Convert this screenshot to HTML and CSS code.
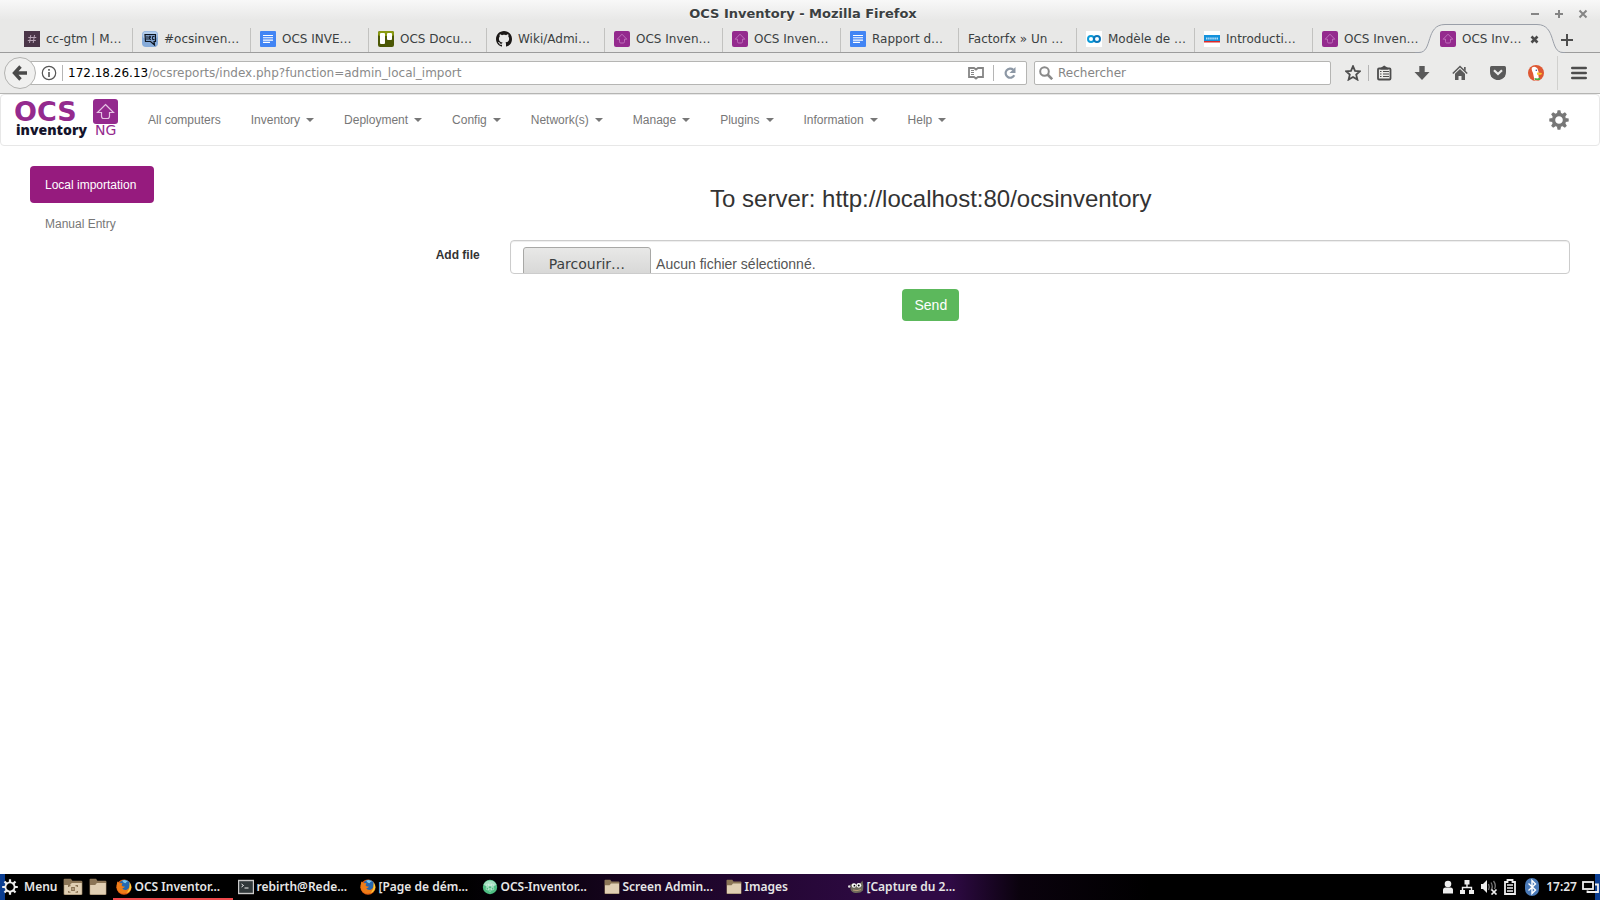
FILE: index.html
```html
<!DOCTYPE html>
<html lang="fr">
<head>
<meta charset="utf-8">
<title>OCS Inventory</title>
<meta name="viewport" content="width=device-width, initial-scale=1">
<link rel="stylesheet" href="styles.css">
</head>
<body>
<svg class="defs" aria-hidden="true">
  <symbol id="ocs" viewBox="0 0 16 16"><rect width="16" height="16" rx="2" fill="#942a8e"/><path d="M8 3.200 12.800 8.200h-2.300v2.300q0 1.500-1.200 1.500H6.700q-1.200 0-1.200-1.500V8.200H3.200z" fill="none" stroke="#c77fc4" stroke-width=".8"/></symbol>
  <symbol id="doc" viewBox="0 0 16 16"><rect width="16" height="16" rx="1" fill="#4285f4"/><path d="M3 4.500h10M3 6.800h10M3 9.100h10M3 11.400h7" stroke="#fff" stroke-width="1.100"/></symbol>
  <symbol id="folder" viewBox="0 0 16 16"><path d="M.5 1.500q0-.8.800-.8h5l1.200 1.800h7q1 0 1 1v10.700q0 .8-.8.800H1.300q-.8 0-.8-.8z" fill="#8b7556"/><path d="M1 6.200h4.500L7 4.500h8v9.500q0 .6-.6.600H1.600q-.6 0-.6-.6z" fill="#e0cfb3"/></symbol>
  <symbol id="firefox" viewBox="0 0 16 16"><circle cx="8" cy="8.200" r="7.600" fill="#e05a10"/><circle cx="8.800" cy="6.300" r="5.600" fill="#2568b0"/><path d="M6 1.500q3.500-1.500 6 1.200-2 0-2.200 1.300-1.800.8-3.800-2.500" fill="#7cc7ec"/><path d="M1.300 2.500 3.800 4.200q1.800-.6 2.700.3L5.500 6.300l1.400 1.200 2 .1q-.6 1.700-2.700 1.600 1.500 2.500 4.500 1.500 3.300-1.300 2.800-5.400 2 4-.7 6.900-3.500 3.400-8 1.800Q.3 12 .6 6.500z" fill="#ee7d18"/><path d="M13.200 3.300q3.200 3.700 1.300 7.700-1.500 2.700-4.500 3.500 4.700-4 3.200-11.200" fill="#ffcf36"/></symbol>
</svg>

<header class="browser">
  <div class="titlebar">
    <span class="window-title">OCS Inventory - Mozilla Firefox</span>
    <div class="window-controls">
      <button aria-label="Réduire"><svg width="10" height="10"><path d="M1 5h8" stroke="#858585" stroke-width="2"/></svg></button>
      <button aria-label="Agrandir"><svg width="10" height="10"><path d="M1 5h8M5 1v8" stroke="#858585" stroke-width="2"/></svg></button>
      <button aria-label="Fermer"><svg width="10" height="10"><path d="M1.500 1.500l7 7M8.500 1.500l-7 7" stroke="#858585" stroke-width="2"/></svg></button>
    </div>
  </div>

  <nav class="tabs" aria-label="Onglets">
    <a class="tab" href="#"><svg class="fav" viewBox="0 0 16 16"><rect width="16" height="16" fill="#4a3548"/><path d="M6.800 4 5.500 12M10.500 4 9.200 12M4.300 6.500h8M3.800 9.500h8" stroke="#b7a3b5" stroke-width="1"/></svg>cc-gtm | M…</a>
    <a class="tab" href="#"><svg class="fav" viewBox="0 0 16 16"><rect width="16" height="16" rx="4" fill="#86abd9"/><rect x=".5" y=".5" width="15" height="7" rx="3.500" fill="#b3cdec"/><path d="M3 3.500h10.500v7H12l.5 3.500-4-3.500h-5z" fill="#7f9fc9" stroke="#0d1520" stroke-width="1.200"/><path d="M5 5v4M7 9V5.300h1.500v1.500H7l1.800 2.200M12.500 5.500h-2v3h2" fill="none" stroke="#0d1520" stroke-width=".9"/></svg>#ocsinven…</a>
    <a class="tab" href="#"><svg class="fav"><use href="#doc"/></svg>OCS INVE…</a>
    <a class="tab" href="#"><svg class="fav" viewBox="0 0 16 16"><rect width="16" height="16" rx="2" fill="#4c5806"/><rect width="16" height="5" rx="2" fill="#8a9a12"/><rect x="2" y="2" width="5" height="11" rx="1" fill="#fff"/><rect x="9" y="2" width="5" height="7" rx="1" fill="#fff"/></svg>OCS Docu…</a>
    <a class="tab" href="#"><svg class="fav" viewBox="0 0 16 16"><path fill="#1b1817" d="M8 0C3.580 0 0 3.580 0 8c0 3.540 2.290 6.530 5.470 7.590.4.070.550-.17.550-.38 0-.19-.01-.82-.01-1.490-2.010.37-2.530-.49-2.690-.94-.09-.23-.48-.94-.82-1.130-.28-.15-.68-.52-.01-.53.630-.01 1.080.580 1.230.820.720 1.210 1.870.870 2.330.660.070-.52.280-.87.510-1.070-1.780-.2-3.640-.89-3.640-3.950 0-.87.310-1.590.820-2.150-.08-.2-.36-1.020.080-2.120 0 0 .670-.21 2.200.820.640-.18 1.320-.27 2-.27s1.360.09 2 .27c1.530-1.040 2.200-.82 2.200-.82.440 1.100.160 1.920.080 2.120.510.560.820 1.270.820 2.150 0 3.070-1.870 3.750-3.650 3.950.290.250.540.730.540 1.480 0 1.070-.01 1.930-.01 2.200 0 .210.150.460.550.380A8.010 8.010 0 0 0 16 8c0-4.420-3.580-8-8-8"/></svg>Wiki/Admi…</a>
    <a class="tab" href="#"><svg class="fav"><use href="#ocs"/></svg>OCS Inven…</a>
    <a class="tab" href="#"><svg class="fav"><use href="#ocs"/></svg>OCS Inven…</a>
    <a class="tab" href="#"><svg class="fav"><use href="#doc"/></svg>Rapport d…</a>
    <a class="tab" href="#">Factorfx » Un …</a>
    <a class="tab" href="#"><svg class="fav" viewBox="0 0 16 16"><rect width="16" height="16" fill="#fff"/><circle cx="5" cy="8" r="3" fill="none" stroke="#0a9ad8" stroke-width="2"/><circle cx="11" cy="8" r="3" fill="none" stroke="#0a78bc" stroke-width="2"/></svg>Modèle de …</a>
    <a class="tab" href="#"><svg class="fav" viewBox="0 0 16 16"><rect width="16" height="16" fill="#fff"/><rect y="4" width="16" height="6" fill="#1592dc"/><path d="M2 7.500h12" stroke="#b8def5" stroke-width="2" stroke-dasharray="1.500 .6"/><rect y="10" width="16" height="1.500" fill="#dc2a2a"/></svg>Introducti…</a>
    <a class="tab last" href="#"><svg class="fav"><use href="#ocs"/></svg>OCS Inven…</a>
    <a class="tab active" href="#" aria-current="page">
      <svg class="tab-shape" width="150" height="30" viewBox="0 0 150 30"><path d="M0 28.500h4C18 28.500 10 .5 30 .5h92c20 0 12 28 26 28h2V30H0z" fill="#ebebea"/><path d="M0 28.500h4C18 28.500 10 .5 30 .5h92c20 0 12 28 26 28h2" fill="none" stroke="#9a9fa8"/></svg>
      <svg class="fav"><use href="#ocs"/></svg><span>OCS Inv…</span>
      <svg class="close" width="9" height="9"><path d="M1.500 1.500l6 6M7.500 1.500l-6 6" stroke="#4a4a4a" stroke-width="2.600"/></svg>
    </a>
    <button class="new-tab" aria-label="Nouvel onglet"><svg width="12" height="12"><path d="M0 6h12M6 0v12" stroke="#4d4d4d" stroke-width="2"/></svg></button>
  </nav>

  <div class="toolbar">
    <button class="back" aria-label="Retour"><svg width="16" height="16"><path d="M8.500 1.500 2.500 8l6 6.500M3 8h12" fill="none" stroke="#4a4a4a" stroke-width="3.400"/></svg></button>
    <div class="urlbar">
      <svg width="16" height="16"><circle cx="8" cy="8" r="6.700" fill="none" stroke="#555" stroke-width="1.200"/><path d="M8 7v5M8 4v1.800" stroke="#555" stroke-width="1.600"/></svg>
      <i class="rule"></i>
      <a class="url" href="#"><b>172.18.26.13</b>/ocsreports/index.php?function=admin_local_import</a>
      <svg width="16" height="14"><path d="M1 2h5l2 1.500L10 2h5v9h-5l-2 1.500L6 11H1z" fill="#fff" stroke="#858585" stroke-width="1.800"/><path d="M3 4.500h3M3 6.500h3M3 8.500h3" stroke="#858585"/></svg>
      <i class="rule"></i>
      <svg width="14" height="14"><path d="M11.300 9.300a4.600 4.600 0 1 1-1-5.600" fill="none" stroke="#8d98a5" stroke-width="2.200"/><path d="M12.500 1v6h-6z" fill="#8d98a5"/></svg>
    </div>
    <div class="search">
      <svg width="14" height="14"><circle cx="5.500" cy="5.500" r="4.300" fill="none" stroke="#8a8a8a" stroke-width="2"/><path d="M8.500 8.500l4.700 4.700" stroke="#8a8a8a" stroke-width="2.600"/></svg>
      <input type="text" placeholder="Rechercher" aria-label="Rechercher">
    </div>
    <div class="tools">
      <button class="star" aria-label="Marque-page"><svg width="16" height="16"><path d="M8 1.200l2 4.700 5 .4-3.800 3.300 1.200 5L8 12l-4.400 2.600 1.200-5L1 6.300l5-.4z" fill="none" stroke="#4d4d4d" stroke-width="1.800"/></svg></button>
      <i class="rule"></i>
      <button class="list" aria-label="Liste"><svg width="16" height="16"><rect x="2" y="3.500" width="12.500" height="11" rx="1" fill="none" stroke="#4d4d4d" stroke-width="1.800"/><path d="M4.500 4.500V3L8.200.5 12 3v1.500z" fill="#4d4d4d"/><path d="M4 6.500h1.500M7 6.500h6M4 9h1.500M7 9h6M4 11.500h1.500M7 11.500h6" stroke="#4d4d4d" stroke-width="1.200"/></svg></button>
      <button aria-label="Téléchargements"><svg width="16" height="16"><path d="M5.300 1h5.400v6H15.500L8 15 .5 7h4.800z" fill="#5a5a5a"/></svg></button>
      <button aria-label="Accueil"><svg width="16" height="16"><path d="M.8 8.500 8 1.500l7.200 7" fill="none" stroke="#5a5a5a" stroke-width="1.600"/><path d="M3 8.700 8 4l5 4.700V15H9.500v-4h-3v4H3zM12 2h1.700v4L12 4.500z" fill="#5a5a5a"/></svg></button>
      <button aria-label="Pocket"><svg width="16" height="16"><path d="M0 2.500q0-1.500 1.500-1.500h13Q16 1 16 2.500V7q0 5-4 7l-2.500.9h-3L4 14Q0 12 0 7z" fill="#5a5a5a"/><path d="M4 5.200 8 9l4-3.800" fill="none" stroke="#ebebea" stroke-width="2.200"/></svg></button>
      <button aria-label="DuckDuckGo"><svg width="16" height="16"><circle cx="8" cy="8" r="8" fill="#de5833"/><path d="M4 2.500Q7 .8 9.500 3.500q1.500 3 .8 6L11 14.500q-2.300 1.300-4.500.8L5 8Q3 4 4 2.500" fill="#fff"/><path d="M9 7.500l5 .5-.8 1.700H9z" fill="#fdc62e"/><path d="M6.500 13l3 .5 2.500-1v2.500H7z" fill="#4cae42"/><circle cx="8.300" cy="5.300" r=".8" fill="#2d4f8e"/></svg></button>
      <i class="rule tall"></i>
      <button class="menu" aria-label="Menu"><svg width="16" height="14"><path d="M1.300 2h13.400M1.300 7h13.400M1.300 12h13.400" stroke="#4d4d4d" stroke-width="2.600" stroke-linecap="round"/></svg></button>
    </div>
  </div>
</header>

<nav class="navbar">
  <a class="brand" href="#" aria-label="OCS Inventory NG">
    <svg width="104" height="42" viewBox="0 0 104 42">
      <text class="logo-ocs" x="-1" y="23">OCS</text>
      <text class="logo-inv" x="1" y="37">inventory</text>
      <text class="logo-ng" x="80" y="37">NG</text>
      <rect x="78" y="1" width="25" height="25" rx="3" fill="#942a8e"/>
      <path d="M90.500 6.500 98.500 14.500H94.500V18q0 2.500-2 2.500H88.500q-2 0-2-2.500V14.500H82.500z" fill="none" stroke="#e5c3e3" stroke-width="1.200"/>
    </svg>
  </a>
  <ul class="nav-links">
    <li><a href="#">All computers</a></li>
    <li><a href="#">Inventory <i class="caret"></i></a></li>
    <li><a href="#">Deployment <i class="caret"></i></a></li>
    <li><a href="#">Config <i class="caret"></i></a></li>
    <li><a href="#">Network(s) <i class="caret"></i></a></li>
    <li><a href="#">Manage <i class="caret"></i></a></li>
    <li><a href="#">Plugins <i class="caret"></i></a></li>
    <li><a href="#">Information <i class="caret"></i></a></li>
    <li><a href="#">Help <i class="caret"></i></a></li>
  </ul>
  <button class="settings" aria-label="Settings"><svg width="20" height="20" viewBox="-10 -10 20 20"><circle r="5.500" fill="none" stroke="#777" stroke-width="3.400"/><g fill="#777"><path id="tooth" d="M-2.100-6.500-1.400-9.700H1.400L2.100-6.500z"/><use href="#tooth" transform="rotate(45)"/><use href="#tooth" transform="rotate(90)"/><use href="#tooth" transform="rotate(135)"/><use href="#tooth" transform="rotate(180)"/><use href="#tooth" transform="rotate(225)"/><use href="#tooth" transform="rotate(270)"/><use href="#tooth" transform="rotate(315)"/></g></svg></button>
</nav>

<main class="page">
  <nav class="side">
    <a class="pill current" href="#">Local importation</a>
    <a class="pill" href="#">Manual Entry</a>
  </nav>
  <form class="import">
    <h3>To server: http://localhost:80/ocsinventory</h3>
    <div class="field">
      <label for="file">Add file</label>
      <div class="file-control">
        <button type="button" class="browse" tabindex="-1">Parcourir…</button>
        <span>Aucun fichier sélectionné.</span>
        <input type="file" id="file">
      </div>
    </div>
    <button type="button" class="send">Send</button>
  </form>
</main>

<footer class="taskbar">
  <button class="start"><svg width="16" height="16" viewBox="-8 -8 16 16"><circle r="4.600" fill="none" stroke="#eee" stroke-width="1.800"/><path d="M0-5v-2.800M0 5v2.800M-5 0h-2.800M5 0h2.800M3.500 3.500l2 2M-3.500-3.500l-2-2M3.500-3.500l2-2M-3.500 3.500l-2 2" stroke="#eee" stroke-width="2.200"/></svg>Menu</button>
  <button class="launch" aria-label="Dossier personnel"><svg width="20" height="18" viewBox="0 0 16 16" preserveAspectRatio="none"><use href="#folder" width="16" height="16"/><path d="M4.500 8V6.800h1.500M10 6.800h1.500V8M11.500 11.500v1.200H10M6 12.700H4.500v-1.200M7 8.500h2v2.500H7z" fill="none" stroke="#8b7556"/></svg></button>
  <button class="launch" aria-label="Fichiers"><svg width="18" height="18"><use href="#folder"/></svg></button>
  <div class="tasks">
    <button class="task on"><svg class="ti"><use href="#firefox"/></svg>OCS Inventor...</button>
    <button class="task"><svg class="ti" viewBox="0 0 16 16"><rect x=".5" y="1.500" width="15" height="13" fill="#30383a" stroke="#c9c9c9" stroke-width="1.400"/><path d="M3.500 5l2 1.500-2 1.500M6.500 9h4" fill="none" stroke="#eee"/></svg>rebirth@Rede...</button>
    <button class="task"><svg class="ti"><use href="#firefox"/></svg>[Page de dém...</button>
    <button class="task"><svg class="ti" viewBox="0 0 16 16"><circle cx="8" cy="8" r="7.200" fill="#4fbf83"/><path d="M1.500 6A7 7 0 0 1 14.500 6Q8 9 1.500 6" fill="#a3e0c0"/><g fill="none" stroke="#d9f5e6" stroke-width=".5"><ellipse cx="8" cy="8" rx="4.500" ry="1.800" transform="rotate(30 8 8)"/><ellipse cx="8" cy="8" rx="4.500" ry="1.800" transform="rotate(90 8 8)"/><ellipse cx="8" cy="8" rx="4.500" ry="1.800" transform="rotate(150 8 8)"/></g></svg>OCS-Inventor...</button>
    <button class="task"><svg class="ti"><use href="#folder"/></svg>Screen Admin...</button>
    <button class="task"><svg class="ti"><use href="#folder"/></svg>Images</button>
    <button class="task"><svg class="ti" viewBox="0 0 16 16"><path d="M2.500 5.500 5 4.500q5 1.500 7.500-.5L14.500 1.500q1.500 6 .5 10-2.500 3-8 2.500-4-.8-4.500-4z" fill="#6e6a5c"/><circle cx="6" cy="6.500" r="2.200" fill="#fff"/><circle cx="10.800" cy="6.300" r="2.400" fill="#fff"/><circle cx="6.400" cy="6.700" r=".9"/><circle cx="10.700" cy="6.500" r="1"/><circle cx="1.200" cy="7.500" r="1.200" fill="#ddd"/><path d="M5 11q4 1.500 8-.5" stroke="#b8a078" fill="none"/></svg>[Capture du 2...</button>
  </div>
  <div class="tray">
    <svg width="12" height="14"><circle cx="6" cy="4" r="3.300" fill="#eee"/><path d="M1 13.500V10q0-2.500 2.500-2.500h5Q11 7.500 11 10v3.500z" fill="#eee"/></svg>
    <svg width="16" height="16"><path d="M5.500 1h5v4.500h-5zM1 11h5v4H1zM10 11h5v4h-5z" fill="#eee"/><path d="M8 5v4M3.500 11V8.500h9V11" fill="none" stroke="#eee" stroke-width="1.400"/></svg>
    <svg width="18" height="16"><path d="M1 5h2l4-4v13l-4-4H1z" fill="#eee"/><path d="M8.500 5q1.500 3 0 6M11 3.500q2.500 4 0 8M13.500 2q3 4 1 8" fill="none" stroke="#777" stroke-width="1.300"/><path d="M11.500 10.500l5 5M16.500 10.500l-5 5" stroke="#eee" stroke-width="1.700"/></svg>
    <svg width="14" height="16"><path d="M2 3h2.500V1h5v2H12v12H2z" fill="none" stroke="#eee" stroke-width="1.800"/><path d="M4 6h6M4 9h6M4 12h6" stroke="#eee" stroke-width="1.600"/></svg>
    <svg class="bt" width="16" height="20"><rect x="1" y="1" width="14" height="18" rx="7" fill="#4a7ab8"/><path d="M4.500 6.500l7 6.500L8 16.500v-13L11.500 7l-7 6.500" fill="none" stroke="#fff" stroke-width="1.400"/></svg>
    <time>17:27</time>
    <svg width="17" height="14"><rect x="1" y="2" width="10" height="7" fill="none" stroke="#eee" stroke-width="1.800"/><path d="M13 4.500h3V12H5.500v-1.500" fill="none" stroke="#eee" stroke-width="1.800"/></svg>
  </div>
</footer>
</body>
</html>
```

FILE: styles.css
```css
* { box-sizing: border-box; }
body {
  margin: 0;
  min-height: 100vh;
  display: flex;
  flex-direction: column;
  background: #fff;
  color: #333;
  font: 12px/17px "Liberation Sans", Arial, sans-serif;
}
button { font: inherit; color: inherit; background: none; border: 0; padding: 0; }
a { color: inherit; text-decoration: none; }
svg { display: block; flex: none; }
.defs { position: absolute; width: 0; height: 0; }

.browser { font: 12px/16px "DejaVu Sans", sans-serif; color: #3b3f41; background: #ebebea; }
.titlebar {
  position: relative;
  height: 28px;
  padding-left: 6px;
  display: flex;
  align-items: center;
  justify-content: center;
  background: linear-gradient(#f8f8f8, #e8e8e7 20px);
}
.window-title { font-size: 13px; font-weight: bold; text-shadow: 0 1px #fff; }
.window-controls { position: absolute; right: 12px; top: 9px; display: flex; gap: 14px; }

.tabs {
  display: flex;
  height: 25px;
  padding-left: 15px;
  background: #e8e8e7;
  border-bottom: 1px solid #9c9c9c;
}
.tab {
  position: relative;
  flex: 0 1 118px;
  display: flex;
  align-items: center;
  gap: 6px;
  padding: 0 0 2px 9px;
  border-right: 1px solid #c2c2c0;
  white-space: nowrap;
}
.tab.last, .tab.active { border-color: transparent; }
.tab.active { flex-basis: 130px; }
.tab.active span, .tab.active .fav, .close { position: relative; z-index: 1; }
.tab.active .tab-shape { position: absolute; left: -16px; top: -4px; }
.close { margin-left: 2px; }
.fav { width: 16px; height: 16px; }
.new-tab { display: flex; align-items: center; position: relative; z-index: 1; }

.toolbar {
  display: flex;
  align-items: center;
  height: 41px;
  padding: 0 13px 0 4px;
  border-bottom: 1px solid #b5b5b3;
}
.back {
  position: relative;
  z-index: 1;
  width: 32px;
  height: 32px;
  margin-right: -8px;
  display: grid;
  place-items: center;
  border: 1px solid #b3b3b1;
  border-radius: 50%;
  background: #f0f0ef;
}
.urlbar, .search {
  display: flex;
  align-items: center;
  height: 24px;
  background: #fff;
  border: 1px solid #b5b5b3;
  border-radius: 2px;
}
.urlbar { flex: 1; gap: 9px; padding: 0 9px 0 12px; }
.urlbar .rule:first-of-type { margin: 0 -4px 0 -4px; }
.url { flex: 1; color: #8a8a8a; }
.url b { font-weight: normal; color: #000; }
.rule { width: 1px; height: 16px; background: #b5b5b5; }
.search { flex: 0 1 297px; gap: 5px; margin-left: 7px; padding: 0 4px; }
.search input { flex: 1; min-width: 0; border: 0; padding: 0; font: inherit; background: none; }
.search input::placeholder { color: #858585; opacity: 1; }
.tools { display: flex; align-items: center; gap: 22px; padding-left: 14px; }
.tools .star { margin-right: -15px; }
.tools .list { margin-left: -15px; }
.tools .tall { height: 34px; margin: 0 -9px; background: #d0d0ce; }

.navbar {
  display: flex;
  align-items: center;
  height: 52px;
  padding: 0 30px 0 14px;
  border: 1px solid #e7e7e7;
  border-radius: 4px;
  color: #777;
}
.brand { margin: 0 14px 2px 0; }
.logo-ocs { font: bold 27px "DejaVu Sans", sans-serif; fill: #942a8e; }
.logo-inv { font: 800 14px "Open Sans", sans-serif; fill: #14142b; }
.logo-ng { font: 14px "DejaVu Sans", sans-serif; fill: #942a8e; }
.nav-links { flex: 1; display: flex; margin: 0; padding: 0; list-style: none; }
.nav-links a { display: flex; align-items: center; gap: 6px; padding: 0 15px; }
.caret { border: 4px solid transparent; border-top-color: #777; border-bottom: 0; }

.page {
  flex: 1;
  display: grid;
  grid-template-columns: minmax(0, 1fr) minmax(0, 5fr);
  align-items: start;
  padding: 20px 15px;
}
.side { display: flex; flex-direction: column; align-items: flex-start; gap: 2px; padding: 0 15px; }
.pill { min-width: 124px; padding: 11px 15px 9px; border-radius: 4px; color: #777; }
.pill.current { background: #961b7e; color: #fff; }
.import { display: flex; flex-direction: column; align-items: center; padding: 0 15px; }
h3 { margin: 20px 0 28px; font-size: 24px; line-height: 26px; font-weight: 500; }
.field { align-self: stretch; display: grid; grid-template-columns: 188px minmax(0, 1fr); gap: 30px; margin-bottom: 15px; }
.field label { padding-top: 7px; text-align: right; font-weight: bold; }
.file-control {
  position: relative;
  display: flex;
  gap: 5px;
  height: 34px;
  padding: 6px 12px 0;
  overflow: hidden;
  border: 1px solid #ccc;
  border-radius: 4px;
  box-shadow: inset 0 1px 1px #00000013;
  color: #555;
  font-size: 14px;
  line-height: 34px;
}
.browse {
  height: 34px;
  padding: 0 25px;
  border: 1px solid #a8a8a6;
  border-radius: 3px;
  background: linear-gradient(#e8e8e7, #d4d4d3);
  color: #3b3f41;
  font: 14px/32px "DejaVu Sans", sans-serif;
}
.file-control input { position: absolute; inset: 0; width: 100%; height: 100%; opacity: 0; }
.send { padding: 6px 12px; border-radius: 4px; background: #5cb85c; color: #fff; font-size: 14px; line-height: 20px; }

.taskbar {
  display: flex;
  align-items: center;
  height: 26px;
  padding: 0 1px 0 2px;
  background:
    linear-gradient(#0a3d91, #0a3d91) right / 5px 100% no-repeat,
    linear-gradient(90deg, #0a3d91 5px, #000 5px, #000 460px, #1d0528 680px, #2f0a45 900px, #2f0a45 950px, #0a020d 1020px, #000 1150px);
  color: #e6e6e6;
  font: 600 12px/16px "Noto Sans", "Open Sans", sans-serif;
}
.start { display: flex; align-items: center; gap: 6px; }
.launch { margin-left: 6px; }
.tasks { flex: 1; display: flex; gap: 2px; align-self: stretch; margin-left: 6px; }
.task { flex: 0 1 120px; display: flex; align-items: center; gap: 2px; padding: 2px 0 0 3px; border-bottom: 2px solid transparent; white-space: nowrap; }
.task.on { border-color: #f0494c; }
.ti { width: 16px; height: 16px; }
.tray { display: flex; align-items: center; gap: 5px; }
.bt { margin: 0 1px 0 2px; }
```
